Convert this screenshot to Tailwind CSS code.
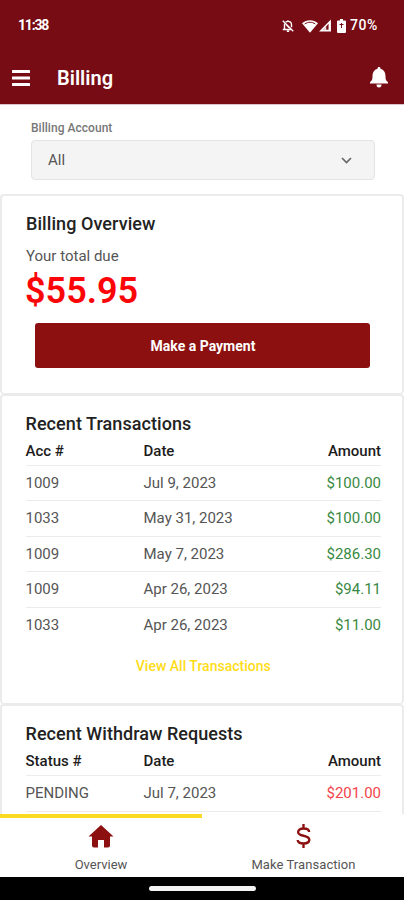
<!DOCTYPE html>
<html lang="en">
    <head>
        <meta charset="UTF-8">
        <meta name="viewport" content="width=device-width, initial-scale=1.0">
        <script src="https://cdn.jsdelivr.net/npm/@tailwindcss/browser@4"></script>
        <title>Billing</title>
    </head>
    <body class="bg-white font-[Roboto,sans-serif] text-[#222]">
        <div class="flex h-[900px] w-[404px] flex-col overflow-hidden">
            <header class="h-[105px] shrink-0 border-b border-[#dcc4c8] bg-[#770c15] text-white">
                <!-- Status bar -->
                <div class="flex h-[51px] items-center pl-[18px] pr-[26px] text-[14px] font-medium">
                    <span class="font-bold tracking-[-1.2px]">11:38</span>
                    <svg class="ml-auto h-[14px] w-[14px]" viewBox="0 0 24 24" fill="none" stroke="currentColor" stroke-width="2.400">
                        <path d="M3 3l18 18M6 8v9M3 18h15M8 5c1-1 2-1 4-1 4 0 6 3 6 6v4M10 21h4M12 2v2M9 10l5 5"/>
                    </svg>
                    <svg class="ml-[7px] h-[14px] w-[16px]" viewBox="0 0 24 20" fill="currentColor">
                        <path d="M12 20L0 6C7 0 17 0 24 6z"/>
                        <path d="M4 7c5-3.500 11-3.500 16 0" fill="none" stroke="#770c15" stroke-width="1.500"/>
                    </svg>
                    <svg class="h-[13px] w-[14px]" viewBox="0 0 22 22">
                        <path d="M21 1v20H1z" fill="currentColor"/>
                        <path d="M17 8v10H8z" fill="#770c15"/>
                        <path d="M13 13v5h-5z" fill="currentColor"/>
                    </svg>
                    <svg class="ml-[5px] h-[14px] w-[9px]" viewBox="0 0 9 14">
                        <path d="M3 0h3v1.500h2q1 0 1 1V13q0 1-1 1H1q-1 0-1-1V2.500q0-1 1-1h2z" fill="currentColor"/>
                        <path d="M4.500 4v5M2.500 5.500h4" stroke="#770c15" stroke-width="1"/>
                    </svg>
                    <span class="ml-[4px] tracking-[0.6px]">70%</span>
                </div>
                <div class="flex h-[53px] items-center pl-3 pr-4">
                    <svg class="h-4 w-[18px]" viewBox="0 0 18 16" fill="currentColor">
                        <rect y="0" width="18" height="3" rx="0.500"/>
                        <rect y="6.500" width="18" height="3" rx="0.500"/>
                        <rect y="13" width="18" height="3" rx="0.500"/>
                    </svg>
                    <h1 class="ml-[27px] text-xl font-semibold">Billing</h1>
                    <svg class="ml-auto h-[21px] w-[18px]" viewBox="0 0 18 21" fill="currentColor">
                        <path d="M9 0c1 0 1.500.600 1.500 1.700C14 2.700 15.500 5.500 15.500 9c0 3.500.500 4.500 2.500 6.200V16.500H0V15.200C2 13.500 2.500 12.500 2.500 9c0-3.500 1.500-6.300 5-7.300C7.500.600 8 0 9 0z"/>
                        <path d="M6.500 17.500h5a2.500 3 0 0 1-5 0z"/>
                    </svg>
                </div>
            </header>

            <main class="min-h-0 flex-1 overflow-hidden">
                <div class="h-[89px] pl-[31px] pr-[29px] pt-4">
                    <div class="h-[19px] text-[12px] leading-[15px] tracking-[0.03px] text-[#777] font-medium">Billing Account</div>
                    <div class="flex h-10 items-center justify-between rounded border border-[#e4e4e4] bg-[#f4f4f4] pl-4 pr-[22px] text-[15px] text-[#555]">
                        <span>All</span>
                        <svg class="h-[7px] w-[11px]" viewBox="0 0 11 7" fill="none" stroke="#666" stroke-width="1.700">
                            <path d="M1 1l4.500 4.500L10 1"/>
                        </svg>
                    </div>
                </div>

                <section class="h-[200px] rounded border-2 border-b-1 border-[#ebebeb] px-6 pt-4">
                    <h2 class="text-[18px] leading-6 font-medium tracking-[0.07px]">Billing Overview</h2>
                    <p class="mt-[10px] text-[15px] leading-5 text-[#555]">Your total due</p>
                    <p class="-ml-px h-[56px] pt-[5px] text-[36px] leading-10 font-semibold text-[#fb0509]">$55.95</p>
                    <button class="mx-auto mt-[1px] block h-[45px] w-[335px] rounded-[3px] bg-[#8c1010] pl-0.5 pt-0.5 text-[14px] font-bold text-white">Make a Payment</button>
                </section>

                <section class="h-[310px] rounded border-2 border-b-1 border-[#ebebeb] pl-[23.500px] pr-[21px] pt-4">
                    <h2 class="text-[18px] leading-6 font-medium tracking-[0.07px]">Recent Transactions</h2>
                    <table class="w-full table-fixed text-[15px] text-[#555]">
                        <thead>
                            <tr class="h-[29px] border-b border-[#ededed] text-left text-[#1c1c1c]">
                                <th class="w-[118px] pt-0.5 font-medium">Acc #</th>
                                <th class="pt-0.5 font-medium">Date</th>
                                <th class="w-[118px] pt-0.5 text-right font-medium">Amount</th>
                            </tr>
                        </thead>
                        <tbody>
                            <tr class="h-[35.500px] border-b border-[#ebebeb]"><td>1009</td><td>Jul 9, 2023</td><td class="text-right text-[#3a8943]">$100.00</td></tr>
                            <tr class="h-[35.500px] border-b border-[#ebebeb]"><td>1033</td><td>May 31, 2023</td><td class="text-right text-[#3a8943]">$100.00</td></tr>
                            <tr class="h-[35.500px] border-b border-[#ebebeb]"><td>1009</td><td>May 7, 2023</td><td class="text-right text-[#3a8943]">$286.30</td></tr>
                            <tr class="h-[35.500px] border-b border-[#ebebeb]"><td>1009</td><td>Apr 26, 2023</td><td class="text-right text-[#3a8943]">$94.11</td></tr>
                            <tr class="h-[35px]"><td>1033</td><td>Apr 26, 2023</td><td class="text-right text-[#3a8943]">$11.00</td></tr>
                        </tbody>
                    </table>
                    <a href="#" class="mt-[14px] block text-center text-[14px] leading-5 font-medium text-[#ffdc18]">View All Transactions</a>
                </section>

                <section class="h-[200px] rounded border-2 border-[#ebebeb] pl-[23.500px] pr-[21px] pt-4">
                    <h2 class="text-[18px] leading-6 font-medium tracking-[0.05px]">Recent Withdraw Requests</h2>
                    <table class="w-full table-fixed text-[15px] text-[#555]">
                        <thead>
                            <tr class="h-[29px] border-b border-[#ededed] text-left text-[#1c1c1c]">
                                <th class="w-[118px] pt-0.5 font-medium">Status #</th>
                                <th class="pt-0.5 font-medium">Date</th>
                                <th class="w-[118px] pt-0.5 text-right font-medium">Amount</th>
                            </tr>
                        </thead>
                        <tbody>
                            <tr class="h-[36px] border-b border-[#ebebeb]"><td>PENDING</td><td>Jul 7, 2023</td><td class="text-right text-[#f5444a]">$201.00</td></tr>
                        </tbody>
                    </table>
                </section>
            </main>

            <nav class="grid h-[63px] shrink-0 grid-cols-2 bg-white text-center text-[13px] leading-4 text-[#555]">
                <a href="#" class="flex flex-col items-center border-t-4 border-[#f9dc22] pt-[7px]">
                    <svg class="h-[23px] w-[26px]" viewBox="0 0 26 23" fill="#8c1010">
                        <path d="M13 0l12.500 11.500H22V20.500q0 2-2 2H16V15h-6v7.500H6q-2 0-2-2V11.500H.500z"/>
                    </svg>
                    <span class="mt-[9px]">Overview</span>
                </a>
                <a href="#" class="flex flex-col items-center pl-px pt-[10px]">
                    <svg class="h-6 w-[15px]" viewBox="0 0 16 24" preserveAspectRatio="none" fill="none" stroke="#8c1010" stroke-width="2.500">
                        <path d="M14 8C14 5.500 11.500 4.500 8 4.500S2.300 6 2.300 8.200C2.300 13 14.200 10.500 14.200 15.800 14.200 18.200 11.800 19.500 8 19.500S1.800 18.300 1.800 16M8 0v4.500M8 19.500V24"/>
                    </svg>
                    <span class="mt-[9px] tracking-[0.07px]">Make Transaction</span>
                </a>
            </nav>
            <div class="flex h-[23px] shrink-0 justify-center bg-black pt-[9px]">
                <div class="h-[5px] w-[107px] rounded-full bg-[#f4f4f4]"></div>
            </div>
        </div>
    </body>
</html>
